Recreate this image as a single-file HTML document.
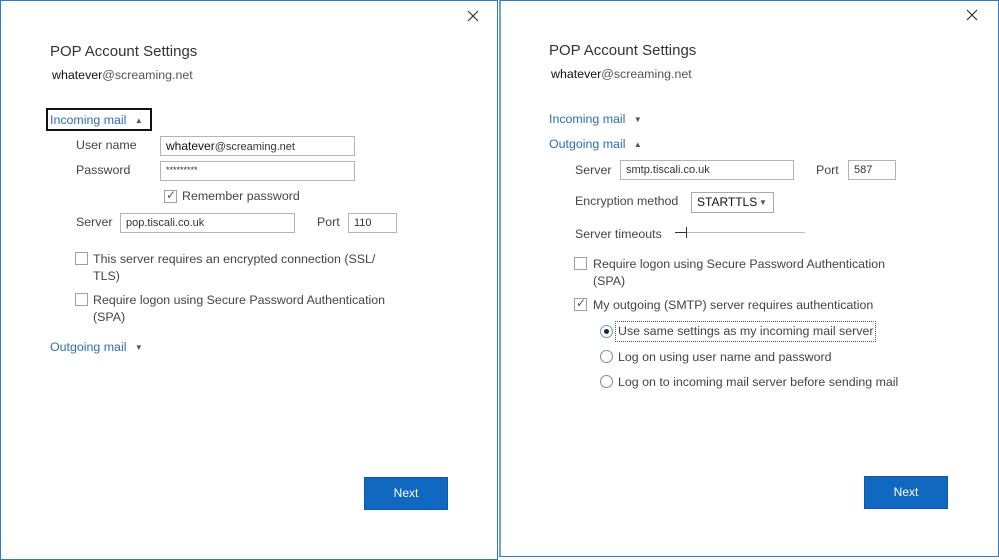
<!DOCTYPE html>
<html><head><style>
*{margin:0;padding:0;box-sizing:border-box}
body{width:999px;height:560px;background:#fff;position:relative;overflow:hidden;font-family:"Liberation Sans",sans-serif;font-size:12.4px;color:#444}
.a{position:absolute;white-space:nowrap;line-height:16px}
.pan{position:absolute;border:1px solid #2b79c9;background:#fff}
.in{position:absolute;border:1px solid #b4b4b4;background:#fff;font-size:11px;color:#333;padding-left:5px;line-height:18px;white-space:nowrap}
.cb{position:absolute;width:13px;height:13px;border:1px solid #a0a0a0;background:#fff}
.rd{position:absolute;width:13px;height:13px;border:1px solid #8a8a8a;border-radius:50%;background:#fff}
.blue{color:#2e6cb5}
.btn{position:absolute;background:#1168c0;border:1px solid #0d5aa8;color:#fff;font-size:12px;text-align:center;line-height:31px}
.t{font-size:15px;color:#333}
.ch{font-size:8px;color:#555;margin-left:5px;vertical-align:1px}
</style></head><body>
<div class="pan" style="left:0;top:0;width:498px;height:560px"></div>
<div class="pan" style="left:499px;top:0;width:500px;height:557px;border-left:2px solid #6aa2dc"></div>

<svg style="position:absolute;left:467px;top:10px" width="12" height="12"><path d="M1 1L11 11M11 1L1 11" stroke="#333" stroke-width="1.2"/></svg>
<div class="a t" style="left:50px;top:44px">POP Account Settings</div>
<div class="a" style="left:52px;top:67px"><span style="color:#111">whatever</span><span style="color:#555">@screaming.net</span></div>
<div style="position:absolute;left:46px;top:108px;width:106px;height:23px;border:2px solid #111"></div>
<div class="a blue" style="left:50px;top:112px">Incoming mail <span class="ch">▲</span></div>
<div class="a" style="left:76px;top:137px">User name</div>
<div class="in" style="left:160px;top:136px;width:195px;height:20px;font-size:12px"><span style="color:#111">whatever</span><span style="font-size:11px">@screaming.net</span></div>
<div class="a" style="left:76px;top:162px">Password</div>
<div class="in" style="left:160px;top:161px;width:195px;height:20px;font-size:9px;line-height:16px">*********</div>
<div class="cb" style="left:164px;top:190px"></div><div class="a" style="left:166px;top:187px;font-size:12px;color:#555">✓</div>
<div class="a" style="left:182px;top:188px">Remember password</div>
<div class="a" style="left:76px;top:214px">Server</div>
<div class="in" style="left:120px;top:213px;width:175px;height:20px">pop.tiscali.co.uk</div>
<div class="a" style="left:317px;top:214px">Port</div>
<div class="in" style="left:348px;top:213px;width:49px;height:20px">110</div>
<div class="cb" style="left:75px;top:252px"></div>
<div class="a" style="left:93px;top:251px;line-height:17px">This server requires an encrypted connection (SSL/<br>TLS)</div>
<div class="cb" style="left:75px;top:293px"></div>
<div class="a" style="left:93px;top:292px;line-height:17px">Require logon using Secure Password Authentication<br>(SPA)</div>
<div class="a blue" style="left:50px;top:339px">Outgoing mail <span class="ch">▼</span></div>
<div class="btn" style="left:364px;top:477px;width:84px;height:33px">Next</div>

<svg style="position:absolute;left:966px;top:9px" width="12" height="12"><path d="M1 1L11 11M11 1L1 11" stroke="#333" stroke-width="1.2"/></svg>
<div class="a t" style="left:549px;top:43px">POP Account Settings</div>
<div class="a" style="left:551px;top:66px"><span style="color:#111">whatever</span><span style="color:#555">@screaming.net</span></div>
<div class="a blue" style="left:549px;top:111px">Incoming mail <span class="ch">▼</span></div>
<div class="a blue" style="left:549px;top:136px">Outgoing mail <span class="ch">▲</span></div>
<div class="a" style="left:575px;top:162px">Server</div>
<div class="in" style="left:620px;top:160px;width:174px;height:20px">smtp.tiscali.co.uk</div>
<div class="a" style="left:816px;top:162px">Port</div>
<div class="in" style="left:848px;top:160px;width:48px;height:20px">587</div>
<div class="a" style="left:575px;top:193px">Encryption method</div>
<div class="in" style="left:691px;top:192px;width:83px;height:21px;font-size:12px;color:#111;border-color:#aaa">STARTTLS</div>
<div class="a" style="left:759px;top:195px;font-size:8px;color:#555">▼</div>
<div class="a" style="left:575px;top:226px">Server timeouts</div>
<div style="position:absolute;left:675px;top:232px;width:130px;height:1px;background:#bbb"></div>
<div style="position:absolute;left:675px;top:232px;width:12px;height:1px;background:#333"></div>
<div style="position:absolute;left:686px;top:227px;width:1px;height:11px;background:#333"></div>
<div class="cb" style="left:574px;top:257px"></div>
<div class="a" style="left:593px;top:256px;line-height:17px">Require logon using Secure Password Authentication<br>(SPA)</div>
<div class="cb" style="left:574px;top:298px"></div><div class="a" style="left:576px;top:295px;font-size:12px;color:#555">✓</div>
<div class="a" style="left:593px;top:297px">My outgoing (SMTP) server requires authentication</div>
<div class="rd" style="left:600px;top:325px;border-color:#5b9bd5"></div>
<div style="position:absolute;left:604px;top:329px;width:5px;height:5px;border-radius:50%;background:#222"></div>
<div style="position:absolute;left:615px;top:321px;width:261px;height:21px;border:1px dotted #555"></div>
<div class="a" style="left:618px;top:323px">Use same settings as my incoming mail server</div>
<div class="rd" style="left:600px;top:350px"></div>
<div class="a" style="left:618px;top:349px">Log on using user name and password</div>
<div class="rd" style="left:600px;top:375px"></div>
<div class="a" style="left:618px;top:374px">Log on to incoming mail server before sending mail</div>
<div class="btn" style="left:864px;top:476px;width:84px;height:33px">Next</div>
</body></html>
